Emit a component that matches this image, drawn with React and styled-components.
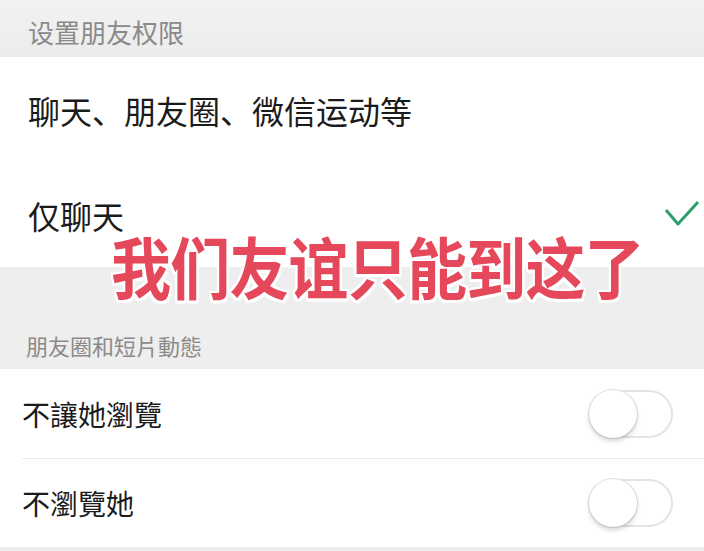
import React from "react";
import styled, { createGlobalStyle } from "styled-components";

const GlobalStyle = createGlobalStyle`
  html, body {
    margin: 0;
    padding: 0;
    background: #ededed;
  }
`;

const Page = styled.div`
  position: relative;
  width: 704px;
  height: 551px;
  overflow: hidden;
  background: #ededed;
  font-family: "Noto Sans CJK SC", "Noto Sans", sans-serif;
`;

const SectionHeader = styled.div`
  box-sizing: border-box;
  height: ${(p) => p.h}px;
  padding: 0 0 ${(p) => p.pb}px ${(p) => p.pl}px;
  display: flex;
  align-items: flex-end;
  font-size: ${(p) => p.size}px;
  color: #8a8a8a;
  background: ${(p) =>
    p.fade ? "linear-gradient(#f2f2f2, #ececec)" : "#eeeeee"};
  font-family: ${(p) =>
    p.tc
      ? '"Noto Sans CJK TC", "Noto Sans", sans-serif'
      : '"Noto Sans CJK SC", "Noto Sans", sans-serif'};
`;

const Group = styled.div`
  background: #ffffff;
`;

const OptionRow = styled.div`
  box-sizing: border-box;
  height: 105px;
  padding: 0 0 0 28px;
  display: flex;
  align-items: center;
  justify-content: space-between;
  font-size: 32px;
  color: #1b1b1b;
`;

const ToggleRow = styled.div`
  box-sizing: border-box;
  height: 89px;
  margin-left: 22px;
  padding-right: 31px;
  display: flex;
  align-items: center;
  justify-content: space-between;
  font-size: 28px;
  color: #1b1b1b;
  font-family: "Noto Sans CJK TC", "Noto Sans", sans-serif;
  border-top: ${(p) => (p.divider ? "1px solid #ececec" : "none")};
`;

const Check = styled.svg`
  width: 36px;
  height: 28px;
  margin-right: 4px;
  margin-top: -2px;
`;

const Switch = styled.div`
  position: relative;
  box-sizing: border-box;
  width: 84px;
  height: 48px;
  border-radius: 24px;
  border: 2px solid #e4e4e4;
  background: #fff;
`;

const Knob = styled.div`
  position: absolute;
  left: -2px;
  top: -2px;
  width: 48px;
  height: 48px;
  border-radius: 50%;
  background: #fff;
  box-shadow: 0 3px 5px rgba(0, 0, 0, 0.18), 0 0 0 1px #e2e2e2;
`;

const Caption = styled.div`
  position: absolute;
  left: 111px;
  top: 216px;
  font-size: 60px;
  font-weight: 700;
  letter-spacing: -0.8px;
  color: #e5485b;
  white-space: nowrap;
  font-family: "Noto Sans CJK SC", sans-serif;
  transform: scaleY(1.12);
  transform-origin: top left;
  text-shadow: 2px 0 0 #fff, -2px 0 0 #fff, 0 2px 0 #fff, 0 -2px 0 #fff,
    2px 2px 0 #fff, -2px -2px 0 #fff, 2px -2px 0 #fff, -2px 2px 0 #fff,
    0 0 4px rgba(255, 255, 255, 0.9);
`;

const Toggle = () => (
  <Switch>
    <Knob />
  </Switch>
);

export default function App() {
  return (
    <>
      <GlobalStyle />
      <Page>
        <SectionHeader h={57} pb={7} pl={28} size={26} fade>
          设置朋友权限
        </SectionHeader>
        <Group>
          <OptionRow>聊天、朋友圈、微信运动等</OptionRow>
          <OptionRow>
            仅聊天
            <Check viewBox="0 0 36 28">
              <path
                d="M2 10 L14 24 L34 2"
                fill="none"
                stroke="#2f9e6c"
                strokeWidth="3"
                strokeLinejoin="round"
              />
            </Check>
          </OptionRow>
        </Group>
        <SectionHeader h={102} pb={8} pl={26} size={22} tc>
          朋友圈和短片動態
        </SectionHeader>
        <Group>
          <ToggleRow>
            不讓她瀏覽
            <Toggle />
          </ToggleRow>
          <ToggleRow divider>
            不瀏覽她
            <Toggle />
          </ToggleRow>
        </Group>
        <Caption>我们友谊只能到这了</Caption>
      </Page>
    </>
  );
}
